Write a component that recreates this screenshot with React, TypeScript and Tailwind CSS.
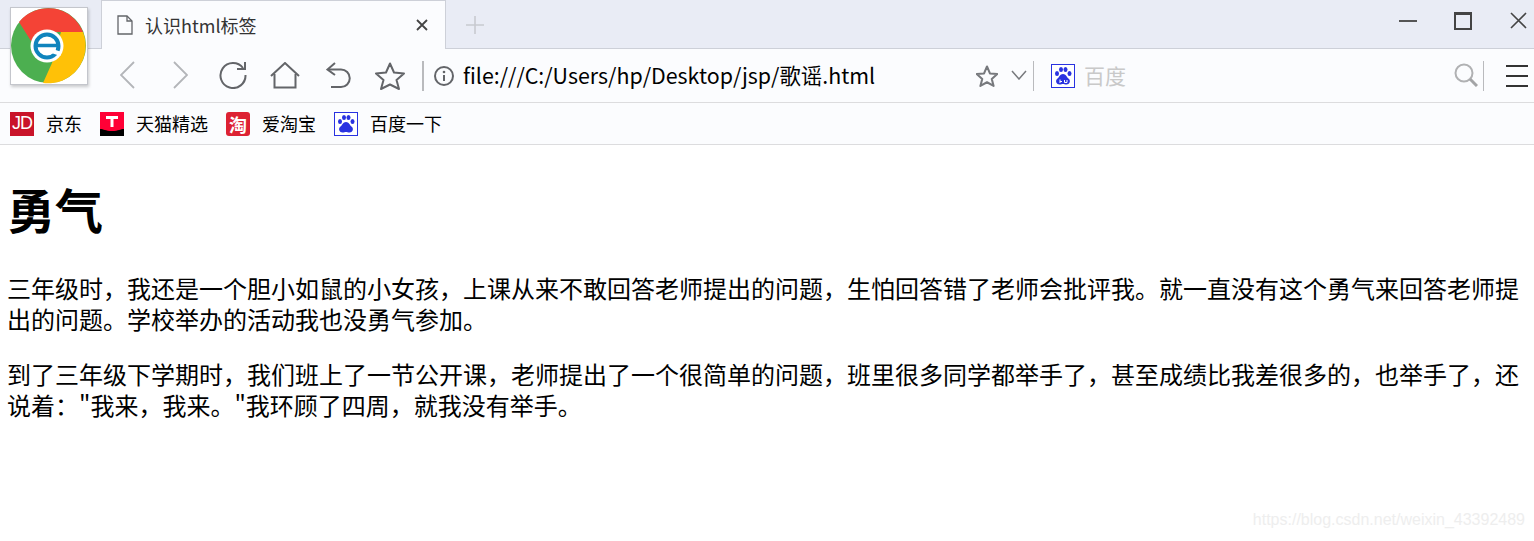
const cjk = "font-['Noto_Sans_CJK_SC','Liberation_Sans',sans-serif]";

// Browser logo, sits over the tab strip and the toolbar
function BrowserLogo() {
  return (
    <div className="absolute left-[10px] top-[7px] w-[78px] h-[78px] bg-white border border-[#c4c6cc] shadow-[1px_2px_3px_rgba(0,0,0,0.2)]">
      <svg width="76" height="76" viewBox="0 0 76 76">
        <circle cx="37.5" cy="37.5" r="37.5" fill="#4caf50" />
        <path d="M8 14 A37.5 37.5 0 0 1 72 24 L36 24 L20 33 Z" fill="#f44336" />
        <path d="M72 24 A37.5 37.5 0 0 1 32 75 L41 55 L50 24 Z" fill="#ffc107" />
        <circle cx="36" cy="38" r="16.5" fill="#fff" />
        <circle cx="36" cy="38" r="11.5" fill="#fff" stroke="#0f84bd" strokeWidth="4" />
        <path d="M25 37.5 H47" stroke="#0f84bd" strokeWidth="3.5" />
        <path d="M41 43 L50 46" stroke="#fff" strokeWidth="4" />
      </svg>
    </div>
  );
}

function Toolbar() {
  return (
    <div className="h-[53px] flex items-center bg-[#fbfcfe] relative">
      <div className="w-[120px] shrink-0" />
      <svg width="15" height="28" viewBox="0 0 15 28" fill="none" stroke="#b3b5b9" strokeWidth="1.8" className="shrink-0 mb-[1px]">
        <path d="M14 1 L1 14 L14 27" />
      </svg>
      <svg width="15" height="28" viewBox="0 0 15 28" fill="none" stroke="#b3b5b9" strokeWidth="1.8" className="ml-[38px] shrink-0 mb-[1px]">
        <path d="M1 1 L14 14 L1 27" />
      </svg>
      <svg width="28" height="28" viewBox="0 0 28 28" fill="none" stroke="#636569" strokeWidth="2" className="ml-[31px] shrink-0 mb-[1px]">
        <path d="M24 7 A12.5 12.5 0 1 0 26.5 14" />
        <path d="M26 1 V8 H18" />
      </svg>
      <svg width="30" height="27" viewBox="0 0 30 27" fill="none" stroke="#636569" strokeWidth="2" className="ml-[23px] shrink-0">
        <path d="M1 14 L15 1 L29 14" />
        <path d="M4.5 12 V25.5 H25.5 V12" />
      </svg>
      <svg width="25" height="27" viewBox="0 0 25 27" fill="none" stroke="#636569" strokeWidth="2" className="ml-[26px] shrink-0">
        <path d="M9 1 L1.5 7.5 L9 13" />
        <path d="M2 7.5 H15 A8.5 8.5 0 0 1 15 25 H5" />
      </svg>
      <svg width="30" height="28" viewBox="0 0 30 28" fill="none" stroke="#636569" strokeWidth="2" strokeLinejoin="round" className="ml-[24px] shrink-0">
        <path d="M15 1.5 L19 10.5 L29 11.5 L21.5 18 L24 27 L15 22.5 L6 27 L8.5 18 L1 11.5 L11 10.5 Z" />
      </svg>
      <div className="w-[2px] h-[30px] bg-[#b9babd] ml-[17px] shrink-0" />
      <svg width="20" height="20" viewBox="0 0 20 20" fill="none" className="ml-[10px] shrink-0">
        <circle cx="10" cy="10" r="9" stroke="#636569" strokeWidth="2" />
        <circle cx="10" cy="6" r="1.3" fill="#636569" />
        <path d="M10 9 V15" stroke="#636569" strokeWidth="2" />
      </svg>
      <span className={`ml-[9px] text-[21.4px] text-black whitespace-nowrap ${cjk}`}>file:///C:/Users/hp/Desktop/jsp/歌谣.html</span>
      <div className="flex-1" />
      <svg width="22" height="22" viewBox="0 0 30 30" fill="none" stroke="#77797d" strokeWidth="2.8" strokeLinejoin="round" className="shrink-0">
        <path d="M15 2 L19 11.5 L29 12.3 L21.5 19 L24 28.5 L15 23.5 L6 28.5 L8.5 19 L1 12.3 L11 11.5 Z" />
      </svg>
      <svg width="16" height="10" viewBox="0 0 16 10" fill="none" stroke="#77797d" strokeWidth="1.5" className="ml-[13px] mb-[2px] shrink-0">
        <path d="M1 1 L8 9 L15 1" />
      </svg>
      <div className="w-px h-[30px] bg-[#b9babd] ml-[6px] shrink-0" />
      <BaiduBox size={24} className="ml-[17px]" du />
      <span className={`ml-[9px] text-[21px] text-[#c9c9c9] whitespace-nowrap ${cjk}`}>百度</span>
      <div className="w-[328px] shrink-0" />
      <svg width="24" height="24" viewBox="0 0 24 24" fill="none" stroke="#b0b1b3" strokeWidth="2" className="shrink-0 mb-[2px]">
        <circle cx="10" cy="10" r="8.5" />
        <path d="M16 16 L23 23" strokeWidth="3" stroke="#a3a4a6" />
      </svg>
      <div className="w-px h-[30px] bg-[#b9babd] ml-[5px] shrink-0" />
      <div className="ml-[22px] mr-[6px] w-[22px] flex flex-col gap-[8px] shrink-0">
        <div className="h-[2px] bg-[#333]" />
        <div className="h-[2px] bg-[#333]" />
        <div className="h-[2px] bg-[#333]" />
      </div>
    </div>
  );
}

function BaiduBox({ size, className, du }: { size: number; className?: string; du?: boolean }) {
  return (
    <svg width={size} height={size} viewBox="0 0 24 24" className={`shrink-0 ${className ?? ""}`}>
      <rect x="0.5" y="0.5" width="23" height="23" fill="#fff" stroke="#2932e1" />
      <g fill="#2932e1">
        <ellipse cx="6" cy="9.5" rx="2" ry="2.6" />
        <ellipse cx="10" cy="5.5" rx="2" ry="2.6" />
        <ellipse cx="14.5" cy="5.5" rx="2" ry="2.6" />
        <ellipse cx="18.5" cy="9.5" rx="2" ry="2.6" />
        <path d="M12 10 C15 10 15.5 13 18 15 C20 17 18.5 20.5 15.5 20.5 C14 20.5 13 20 12 20 C11 20 10 20.5 8.5 20.5 C5.5 20.5 4 17 6 15 C8.5 13 9 10 12 10 Z" />
      </g>
      {du && <path d="M9 15.5 V19 M11 17.5 H9 M13.5 16 V18.5 H16 V16" stroke="#fff" strokeWidth="1" fill="none" />}
    </svg>
  );
}

function Bookmarks() {
  return (
    <div className={`h-[41px] flex items-center bg-[#fbfcfe] text-[18px] text-black ${cjk}`}>
      <div className="w-[24px] h-[24px] ml-[10px] bg-[#c9142a] text-white flex items-center justify-center shrink-0">
        <span className="text-[18px] font-['Liberation_Sans',sans-serif] tracking-[-1px]">JD</span>
      </div>
      <span className="ml-[12px] w-[54px] whitespace-nowrap">京东</span>
      <svg width="24" height="24" viewBox="0 0 24 24" className="shrink-0">
        <rect width="24" height="24" fill="#ff0036" />
        <path d="M0 24 V17 C4 17 5 19 12 19 C19 19 20 17 24 17 V24 Z" fill="#000" />
        <path d="M6 4 H18 V7 H13.5 V15 H10.5 V7 H6 Z" fill="#fff" />
      </svg>
      <span className="ml-[12px] w-[90px] whitespace-nowrap">天猫精选</span>
      <div className="w-[24px] h-[24px] bg-[#dd2233] rounded-[3px] text-white flex items-center justify-center shrink-0 text-[18px] font-bold leading-none">淘</div>
      <span className="ml-[12px] w-[72px] whitespace-nowrap">爱淘宝</span>
      <BaiduBox size={24} />
      <span className="ml-[12px] whitespace-nowrap">百度一下</span>
    </div>
  );
}

export default function App() {
  return (
    <div lang="zh-CN" className={`w-[1534px] h-[541px] bg-white overflow-hidden relative ${cjk}`}>
      {/* Tab strip */}
      <div className="h-[49px] bg-[#e9ecf5] border-b border-[#cdd0d8] flex relative">
        <div className="ml-[101px] w-[345px] h-[49px] bg-[#fbfcfe] border border-b-0 border-[#cdd0d8] flex items-center relative">
          <svg width="16" height="20" viewBox="0 0 16 20" fill="none" stroke="#636569" strokeWidth="1.3" className="ml-[15px] shrink-0">
            <path d="M1 1 H10 L15 6 V19 H1 Z" />
            <path d="M10 1 V6 H15" />
          </svg>
          <span className="ml-[12px] text-[18px] text-[#333] whitespace-nowrap">认识html标签</span>
          <div className="flex-1" />
          <svg width="12" height="12" viewBox="0 0 12 12" stroke="#444" strokeWidth="1.8" className="mr-[17px] shrink-0">
            <path d="M1 1 L11 11 M11 1 L1 11" />
          </svg>
        </div>
        <svg width="18" height="18" viewBox="0 0 18 18" stroke="#c8cad0" strokeWidth="1.6" className="ml-[20px] mt-[16px] shrink-0">
          <path d="M9 0 V18 M0 9 H18" />
        </svg>
        <div className="flex-1" />
        <div className="flex items-start pt-[12px] pr-[7px]">
          <div className="w-[18px] h-[2px] bg-[#555] mt-[8px]" />
          <div className="w-[18px] h-[18px] border-2 border-t-[3px] border-[#444] ml-[37px]" />
          <svg width="17" height="17" viewBox="0 0 17 17" stroke="#444" strokeWidth="1.6" className="ml-[38px]">
            <path d="M1 1 L16 16 M16 1 L1 16" />
          </svg>
        </div>
      </div>

      <Toolbar />
      <div className="h-px bg-[#dcdcde]" />
      <Bookmarks />
      <div className="h-px bg-[#dcdcde]" />

      {/* Page */}
      <div className="pl-[7px] pr-[8px] text-black">
        <h1 className="text-[48px] font-bold leading-[50px] mt-[38px]">勇气</h1>
        <p className="text-[24px] leading-[31px] mt-[39px]">
          三年级时，我还是一个胆小如鼠的小女孩，上课从来不敢回答老师提出的问题，生怕回答错了老师会批评我。就一直没有这个勇气来回答老师提出的问题。学校举办的活动我也没勇气参加。
        </p>
        <p className="text-[24px] leading-[31px] mt-[24px]">
          到了三年级下学期时，我们班上了一节公开课，老师提出了一个很简单的问题，班里很多同学都举手了，甚至成绩比我差很多的，也举手了，还说着："我来，我来。"我环顾了四周，就我没有举手。
        </p>
      </div>

      <BrowserLogo />

      {/* Watermark */}
      <span className="absolute right-[9px] bottom-[9px] text-[16px] text-[#eeeeee] font-['Liberation_Sans',sans-serif]">https://blog.csdn.net/weixin_43392489</span>
    </div>
  );
}
